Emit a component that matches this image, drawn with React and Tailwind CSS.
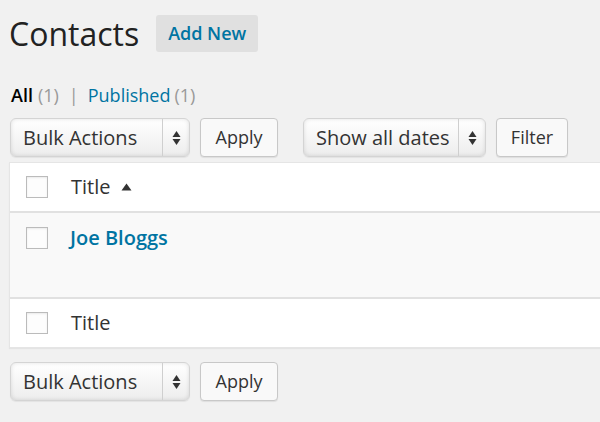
function Select({ label, width, divider }) {
  return (
    <div
      className="flex h-[39px] items-stretch rounded-[6px] border border-[#d4d4d4] bg-gradient-to-b from-[#ffffff] to-[#ededed] shadow-[inset_0_0_4px_rgba(0,0,0,0.12),0_1px_1px_rgba(0,0,0,0.06)]"
      style={{ width }}
    >
      <div className="flex flex-1 items-center whitespace-nowrap pl-[12px] text-[20px] text-[#333]">{label}</div>
      <div className="flex items-center justify-center border-l border-[#cfcfcf]" style={{ width: divider }}>
        <svg width="9" height="16" viewBox="0 0 9 16">
          <path d="M4.5 1 L8.5 7 L0.5 7 Z" fill="#333" />
          <path d="M0.5 9 L8.5 9 L4.5 15 Z" fill="#333" />
        </svg>
      </div>
    </div>
  );
}

function Button({ children, width }) {
  return (
    <button
      className="flex h-[39px] items-center justify-center rounded-[4px] border border-[#c8c8c8] bg-[#f9f9f9] text-[18px] text-[#333] shadow-[0_1px_1px_rgba(0,0,0,0.08)]"
      style={{ width }}
    >
      {children}
    </button>
  );
}

function Checkbox() {
  return <div className="h-[22px] w-[22px] shrink-0 border border-[#bbb] bg-[#fdfdfd] shadow-[inset_0_1px_2px_rgba(0,0,0,0.08)]" />;
}

export default function App() {
  return (
    <div className="h-[422px] w-[600px] overflow-hidden bg-[#f1f1f1] font-['Open_Sans',sans-serif]">
      <div className="flex items-center pl-[9px] pt-[15px]">
        <h1 className="text-[32px] leading-[37px] text-[#222]">Contacts</h1>
        <div className="ml-[17px] flex h-[37px] w-[102px] items-center justify-center rounded-[3px] bg-[#e0e0e0] text-[18px] font-semibold text-[#0074a2]">
          Add New
        </div>
      </div>

      <div className="mt-[32px] flex items-center pl-[11px] text-[18px] leading-[22px]">
        <span className="font-semibold text-[#000]">All</span>
        <span className="ml-[5px] text-[#999]">(1)</span>
        <span className="ml-[10px] mr-[9px] text-[#999]">|</span>
        <span className="text-[#0074a2]">Published</span>
        <span className="ml-[4px] text-[#999]">(1)</span>
      </div>

      <div className="mt-[12px] flex items-center pl-[10px]">
        <Select label="Bulk Actions" width={180} divider={27} />
        <div className="ml-[10px]">
          <Button width={78}>Apply</Button>
        </div>
        <div className="ml-[25px]">
          <Select label="Show all dates" width={183} divider={27} />
        </div>
        <div className="ml-[10px]">
          <Button width={72}>Filter</Button>
        </div>
      </div>

      <div className="ml-[9px] mt-[5px] w-[620px] border border-[#e5e5e5] bg-white shadow-[0_1px_1px_rgba(0,0,0,0.05)]">
        <div className="flex h-[50px] items-center border-b-2 border-[#e1e1e1] pl-[16px]">
          <Checkbox />
          <span className="ml-[23px] text-[20px] text-[#333]">Title</span>
          <svg className="ml-[11px]" width="11" height="8" viewBox="0 0 11 8">
            <path d="M5.5 0.5 L10.5 7.5 L0.5 7.5 Z" fill="#333" />
          </svg>
        </div>
        <div className="flex h-[84px] items-start bg-[#f9f9f9] pl-[16px] pt-[14px]">
          <Checkbox />
          <span className="ml-[22px] -mt-[3px] text-[20px] leading-[28px] font-semibold text-[#0074a2]">Joe Bloggs</span>
        </div>
        <div className="flex h-[50px] items-center border-t-2 border-[#e1e1e1] pl-[16px]">
          <Checkbox />
          <span className="ml-[23px] text-[20px] text-[#333]">Title</span>
        </div>
      </div>

      <div className="mt-[14px] flex items-center pl-[10px]">
        <Select label="Bulk Actions" width={180} divider={27} />
        <div className="ml-[10px]">
          <Button width={78}>Apply</Button>
        </div>
      </div>
    </div>
  );
}
